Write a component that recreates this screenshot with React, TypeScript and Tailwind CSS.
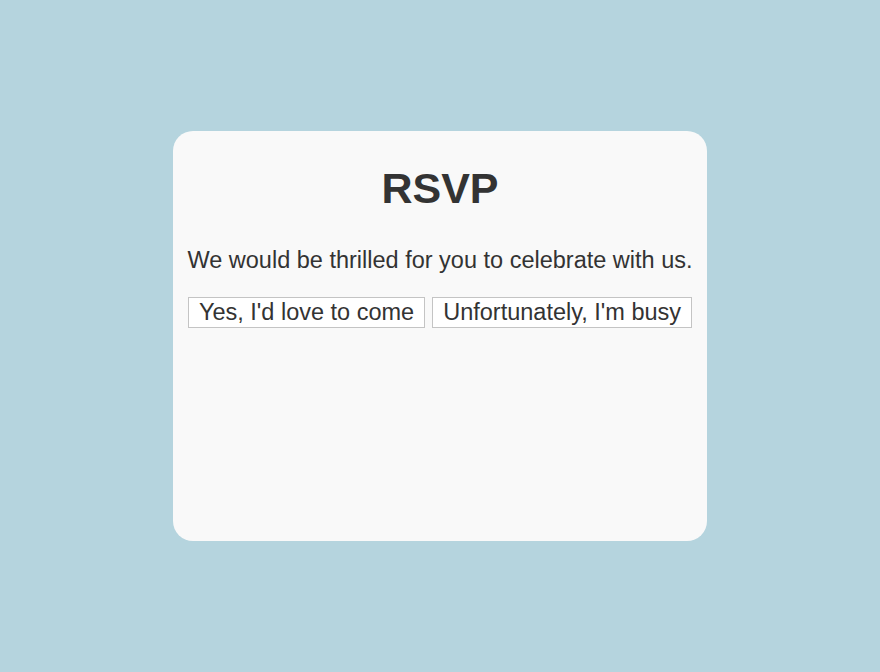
import React from 'react'

const App = () => {
  return (
    <div className="flex h-[672px] w-full items-center justify-center bg-[#b5d4de] font-['Liberation_Sans',Arial,sans-serif] text-[#333]">
      <div className="flex h-[410px] w-[534px] flex-col items-center rounded-[20px] bg-[#f9f9f9] pt-[30px]">
        <h1 className="text-[43px] font-bold leading-[54px]">RSVP</h1>
        <p className="mt-[31px] text-[23.5px] leading-[28px]">We would be thrilled for you to celebrate with us.</p>
        <div className="mt-[23px] flex gap-[7px]">
          <button className="h-[31px] border border-[#c4c4c4] bg-white px-[10px] text-[23.5px] leading-none text-[#333]">Yes, I'd love to come</button>
          <button className="h-[31px] border border-[#c4c4c4] bg-white px-[10px] text-[23.5px] leading-none text-[#333]">Unfortunately, I'm busy</button>
        </div>
      </div>
    </div>
  )
}

export default App
